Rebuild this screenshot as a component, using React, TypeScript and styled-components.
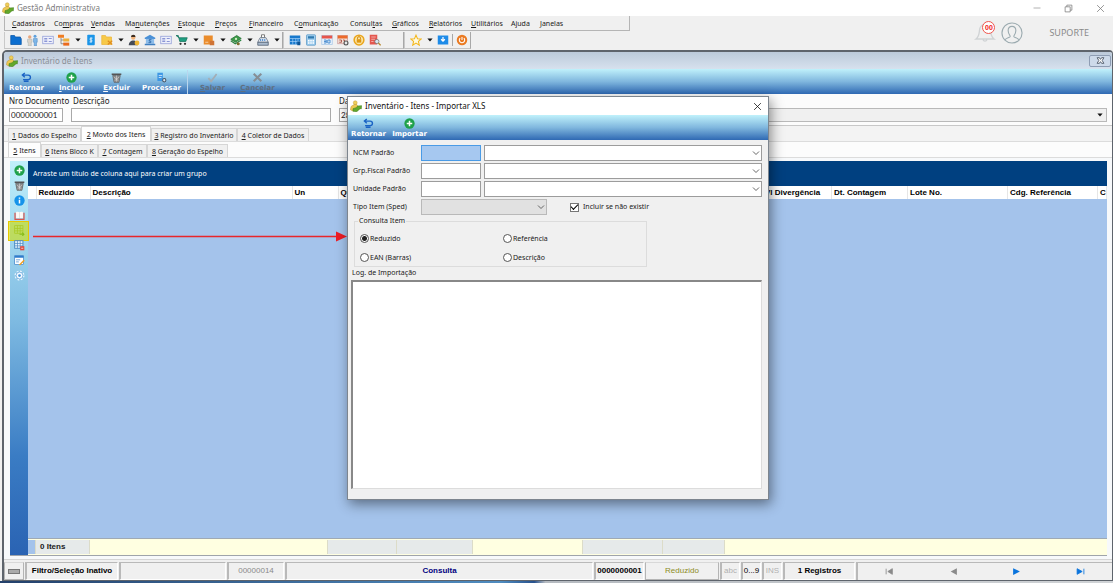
import React from 'react';
import styled, { createGlobalStyle, css } from 'styled-components';

const GlobalStyle = createGlobalStyle`
  * { box-sizing: border-box; }
  body { margin: 0; background: #f0f0f0; font-family: 'Noto Sans', sans-serif; font-size: 8px; line-height: 12px; color: #1a1a1a; }
  button, input, select, textarea { font: inherit; color: inherit; margin: 0; }
  #root { display: flex; min-height: 100vh; }
`;

const barGradient = 'linear-gradient(#c0f1fb, #80b7de 50%, #2f69b3)';
const uiSmall = css`font-family: 'Noto Sans', sans-serif; font-size: 7px; line-height: 12px;`;
const sans = css`font-family: 'Liberation Sans', sans-serif; font-size: 8px; line-height: 12px;`;
const narrow = css`font-family: Lato, sans-serif; font-size: 8px; line-height: 12px;`;

/* ---------- icons ---------- */

const drawings: Record<string, React.ReactNode> = {
  app: (
    <>
      <circle cx="7" cy="3.600" r="2.600" fill="#efcf5a" stroke="#c39a35" strokeWidth=".6" />
      <path d="M5.500 6h3.500l2 2.500-1 4.500-6.500 1.500L.500 13l1-4.500z" fill="#edc952" stroke="#b68a2a" strokeWidth=".6" />
      <path d="M4 11.500l5-1.500 1-2 5.500-.5-.5 4.500-1.500-.5L9 15.500l-5-.5z" fill="#63a82c" stroke="#3f7d1c" strokeWidth=".7" />
    </>
  ),
  folder: <path d="M1 2h5l1 2h7v2h1v8H1z" fill="#0d6fd0" stroke="#0a57a8" />,
  people: (
    <>
      <circle cx="5" cy="4" r="2.300" fill="#e9a77c" /><circle cx="12" cy="3" r="2" fill="#5da0dd" />
      <path d="M2 7h6v4H7v5H3v-5H2z" fill="#dcd3c9" stroke="#9aa" strokeWidth=".6" />
      <path d="M10 6h5v5h-1v5h-3v-5h-1z" fill="#7db6e8" stroke="#3f7fc0" strokeWidth=".6" />
    </>
  ),
  card: (
    <>
      <rect x="1" y="3" width="14" height="10" fill="#eef0fb" stroke="#8f9bd6" />
      <path d="M3 6h4M3 8h4M3 10h4M9 6h4M9 10h4" stroke="#7f8bd0" strokeWidth="1.200" />
    </>
  ),
  tree: (
    <>
      <path d="M4 5v8h5M4 8h5" stroke="#777" fill="none" />
      <rect x="0" y="1" width="8" height="4" fill="#ef7d22" /><rect x="7" y="6" width="8" height="4" fill="#efb03c" /><rect x="7" y="11.500" width="8" height="4" fill="#eb6a1c" />
    </>
  ),
  money: (
    <>
      <rect x="3" y="1" width="10" height="14" rx="1" fill="#1b95e8" />
      <path d="M10 5.500H7.500a1.300 1.300 0 0 0 0 2.500h1a1.300 1.300 0 0 1 0 2.500H6M8 4.500v7" stroke="#fff" fill="none" />
    </>
  ),
  folderGear: (
    <>
      <path d="M1 2h5l1 2h7v10H1z" fill="#f7c948" stroke="#ecb63c" /><path d="M9 9l6 5M15 9l-6 5" stroke="#df8b1e" strokeWidth="1.500" />
    </>
  ),
  person: (
    <>
      <circle cx="7" cy="4.500" r="3" fill="#f0b27a" /><path d="M4 4a3 3 0 0 1 6 0z" fill="#3a2c22" />
      <path d="M1 15c0-4 3-6.500 6-6.500s6 2.500 6 6.500z" fill="#454b57" /><circle cx="12" cy="12" r="3.200" fill="#f2b632" />
    </>
  ),
  bank: (
    <>
      <path d="M1 5l7-4 7 4v1.500H1z" fill="#4a90d6" /><path d="M2.500 6.500h11V13h-11z" fill="#8dbdea" /><path d="M1 13h14v2H1z" fill="#3f7fc0" />
      <path d="M10 7.500H7v2h2v2H6" stroke="#225e9f" fill="none" />
    </>
  ),
  cart: (
    <>
      <path d="M0 2h3l2 8h8l2-5H4z" fill="#1f9e80" stroke="#14715b" /><circle cx="6" cy="13" r="1.500" fill="#333" /><circle cx="12" cy="13" r="1.500" fill="#333" />
    </>
  ),
  box: (
    <>
      <rect x="1" y="2" width="12" height="12" fill="#ea8c2c" /><rect x="9" y="9" width="6" height="6" fill="#cf7436" /><path d="M3 11h4" stroke="#fbe3c5" />
    </>
  ),
  cash: (
    <>
      <path d="M1 7l8-5 6 4-8 5z" fill="#3d9a4a" stroke="#1f6c2e" /><path d="M1 9l6 4 8-5" fill="none" stroke="#2c8340" strokeWidth="1.500" /><circle cx="8" cy="6.500" r="1.500" fill="#d6efc8" /><circle cx="11" cy="13" r="2" fill="#7f6c2f" />
    </>
  ),
  register: (
    <>
      <path d="M6 1h4v4H6z" fill="#fff" stroke="#555" /><path d="M4 5h8l3 6H1z" fill="#eef2f7" stroke="#5c6a7c" /><path d="M1 11h14v4H1z" fill="#a9bacd" stroke="#4c5a6c" /><path d="M4 8h8" stroke="#2f78c8" strokeWidth="2" strokeDasharray="1.500 1" />
    </>
  ),
  sheet: (
    <>
      <rect x="1" y="2" width="14" height="12" fill="#1778cc" /><path d="M1 6h14M1 10h14M5 6v8M9 6v8M12 6v8" stroke="#b6dcff" strokeWidth=".8" /><path d="M11 10h4v5h-4z" fill="#0c5394" />
    </>
  ),
  calc: (
    <>
      <rect x="2" y="1" width="12" height="14" rx="1" fill="#9fcdee" stroke="#5c9ac6" /><rect x="4" y="3" width="8" height="3" fill="#2e79ae" /><path d="M4 9h8M4 12h8" stroke="#fff" strokeWidth="2" strokeDasharray="2 1" />
    </>
  ),
  calBlue: (
    <>
      <rect x="1" y="2" width="14" height="12" fill="#e6f0fb" stroke="#a9c8e8" /><path d="M1 2h14v4H1z" fill="#e7554b" /><path d="M4 8h3v4H4M4 10h3M9 8h3v4H9z" stroke="#2676c6" fill="none" />
    </>
  ),
  calGear: (
    <>
      <rect x="1" y="2" width="13" height="11" fill="#f3dfd5" stroke="#c99" /><path d="M1 2h13v4H1z" fill="#ec6a2a" /><path d="M3 8h3v3H3M8 8h2v3" stroke="#9c3a30" fill="none" /><circle cx="12" cy="12" r="2.600" fill="#e9e9e9" stroke="#555" strokeWidth="1.500" />
    </>
  ),
  lock: (
    <>
      <circle cx="8" cy="8" r="6.500" fill="#fbe3a1" stroke="#eaa51c" strokeWidth="2" /><path d="M6 7V5.500a2 2 0 0 1 4 0V7" fill="none" stroke="#d08a10" strokeWidth="1.300" /><rect x="5" y="7" width="6" height="4.500" fill="#dd9713" />
    </>
  ),
  report: (
    <>
      <path d="M1 1h10v13H1z" fill="#e4574f" /><path d="M3 4h6M3 7h5M3 10h3" stroke="#f9c9c4" /><circle cx="10.500" cy="10" r="2.800" fill="#d7e8f2" stroke="#777" /><path d="M12.500 12l3 3" stroke="#b8862c" strokeWidth="1.600" />
    </>
  ),
  star: <path d="M8 1.500l2 4.700 5 .4-3.800 3.300 1.200 5L8 12.200l-4.400 2.700 1.200-5L1 6.600l5-.4z" fill="#fffbe0" stroke="#f3b61c" strokeWidth="1.400" />,
  download: (
    <>
      <rect x="1" y="2" width="14" height="12" fill="#1e8be8" /><path d="M8 4v5M5.500 7L8 9.500 10.500 7" stroke="#fff" strokeWidth="1.600" fill="none" />
    </>
  ),
  power: (
    <>
      <circle cx="8" cy="8" r="7" fill="#ea7a22" /><path d="M5.500 5.500a3.600 3.600 0 1 0 5 0M8 4v4" stroke="#fff" strokeWidth="1.400" fill="none" />
    </>
  ),
  back: <path d="M2 4.500h8.500a3.200 3.200 0 0 1 0 6.500H3M5.500 1.500L2 4.500 5.500 7.500M4 13.500h7" stroke="#1a63c4" strokeWidth="2" fill="none" />,
  add: (
    <>
      <circle cx="8" cy="8" r="7.500" fill="#1fa14a" /><path d="M8 4v8M4 8h8" stroke="#fff" strokeWidth="2.200" />
    </>
  ),
  trash: (
    <>
      <path d="M1 2h14v2.500H1z" fill="#555" /><path d="M2.500 5h11l-2 10h-7z" fill="#8b8b8b" stroke="#5a5a5a" /><path d="M4 7l7 6M12 7l-7 6M8 5v9" stroke="#e4e4e4" strokeWidth=".8" />
    </>
  ),
  process: (
    <>
      <path d="M2 1h8v12H2z" fill="#3e97e4" /><path d="M4 5h5M4 8h4" stroke="#fff" /><circle cx="12" cy="12" r="2.400" fill="#d8e6f2" stroke="#456" strokeWidth="1.500" />
    </>
  ),
  check: <path d="M2 9l4 4.500L14 3" stroke="#a3adb4" strokeWidth="2.500" fill="none" />,
  cross: <path d="M2.500 2.500l11 11M13.500 2.500l-11 11" stroke="#868e95" strokeWidth="3" fill="none" />,
  info: (
    <>
      <circle cx="8" cy="8" r="7.500" fill="#1593ea" /><path d="M8 7v5.500M8 3.500v2" stroke="#fff" strokeWidth="2.200" />
    </>
  ),
  book: (
    <>
      <path d="M1.500 4v9.500h13V4" fill="none" stroke="#d8554e" strokeWidth="1.800" />
      <path d="M3 3c2-.6 4-.4 5 .8 1-1.200 3-1.400 5-.8v8.500H3z" fill="#fdf8f5" />
      <path d="M8 4v7.500" stroke="#d9c9c4" strokeWidth=".8" />
    </>
  ),
  gridExport: (
    <>
      <rect x="1" y="1" width="12" height="11" fill="none" stroke="#6fa84a" /><path d="M1 5h12M1 8.500h12M5 1v11M9 1v11" stroke="#6fa84a" /><path d="M8 13.500h6M12 11l2.500 2.500L12 16" stroke="#1b8a3e" strokeWidth="1.500" fill="none" />
    </>
  ),
  gridRemove: (
    <>
      <rect x="1" y="1" width="12" height="11" fill="#eaf4fc" stroke="#4383bf" strokeWidth="1.300" /><path d="M1 5h12M1 8.500h12M5 1v11M9 1v11" stroke="#4383bf" /><rect x="9" y="9" width="6" height="6" fill="#e2483d" /><path d="M10.500 12h3" stroke="#fff" />
    </>
  ),
  note: (
    <>
      <rect x="1" y="1" width="13" height="13" fill="#fff" stroke="#3880c8" /><path d="M1 2.500h13" stroke="#2f7ccc" strokeWidth="3" /><path d="M3 7h6M3 10h4" stroke="#3880c8" /><path d="M7 14l7-7 1.500 1.500L9 15z" fill="#f0a020" />
    </>
  ),
  gear: (
    <>
      <circle cx="8" cy="8" r="5.500" fill="none" stroke="#e9f5ff" strokeWidth="3.500" strokeDasharray="2.400 1.900" /><circle cx="8" cy="8" r="5" fill="#f4faff" stroke="#5b9ed6" /><circle cx="8" cy="8" r="2" fill="#4d97d8" />
    </>
  ),
  first: <path d="M2 3v10M13 3L5 8l8 5z" stroke="#8a8a8a" fill="#8a8a8a" strokeWidth="1.500" />,
  prev: <path d="M14 2L3 8l11 6z" fill="#8a8a8a" />,
  next: <path d="M2 2l12 6-12 6z" fill="#0a74dd" />,
  last: <path d="M2 3l9 5-9 5zM14 3v10" stroke="#0a74dd" fill="#0a74dd" strokeWidth="1.500" />,
  caret: <path d="M1 4h14L8 12z" fill="#111" />,
  chevron: <path d="M2 5l6 6 6-6" fill="none" stroke="#555" strokeWidth="1.800" />,
  minimize: <path d="M1 8h14" stroke="#888" strokeWidth="1.300" />,
  restore: <path d="M2 5h9v9H2zM5 5V2h9v9h-3" fill="none" stroke="#777" strokeWidth="1.300" />,
  close: <path d="M2 2l12 12M14 2L2 14" stroke="currentColor" strokeWidth="1.400" />,
  mdiClose: <path d="M2 3h4l2 3 2-3h4l-3 5 3 5h-4l-2-3-2 3H2l3-5z" fill="#fff" stroke="#4b5766" strokeWidth="1.600" />,
  bell: (
    <path d="M2 12c2-1.500 2-3 2.300-5.500C4.500 4 5.500 2.500 8 2.300c2.500.2 3.500 1.700 3.700 4.200C12 9 12 10.500 14 12zM6.700 12.500a1.400 1.400 0 0 0 2.600 0M8 2.300V1.200" fill="none" stroke="#d0d3d5" strokeWidth=".9" />
  ),
  user: (
    <>
      <circle cx="8" cy="8" r="7.300" fill="none" stroke="#9cabb0" strokeWidth=".8" />
      <path d="M3 13c.5-1.500 3.500-1.500 3.700-2.500.1-.8-1.500-1.800-1.500-4.300 0-1.900 1-3 2.800-3s2.800 1.100 2.800 3c0 2.500-1.600 3.500-1.500 4.300.2 1 3.200 1 3.700 2.500" fill="none" stroke="#9cabb0" strokeWidth=".8" />
    </>
  ),
};

const Svg = styled.svg<{ $size: number }>`
  display: block;
  flex: none;
  width: ${(p) => p.$size}px;
  height: ${(p) => p.$size}px;
`;

const Icon = ({ name, size = 12 }: { name: string; size?: number }) => (
  <Svg $size={size} viewBox="0 0 16 16" aria-hidden="true">{drawings[name]}</Svg>
);

/* "&" marks the letter that is the access key */
const KeyText = ({ text }: { text: string }) => {
  const i = text.indexOf('&');
  if (i < 0) return <>{text}</>;
  return <span>{text.slice(0, i)}<u>{text[i + 1]}</u>{text.slice(i + 2)}</span>;
};

/* ---------- application frame ---------- */

const Frame = styled.div`
  position: relative;
  flex: 1;
  min-width: 0;
  display: flex;
  flex-direction: column;
  overflow: hidden;
`;

const PlainButton = styled.button`
  border: 0;
  padding: 0;
  background: none;
  display: flex;
  align-items: center;
  justify-content: center;
`;

const TitleBar = styled.header`
  display: flex;
  align-items: center;
  gap: 3px;
  height: 16px;
  padding: 0 8px 0 2px;
  background: #fff;
  color: #7c7c7c;
`;

const WindowControls = styled.div`
  display: flex;
  gap: 23px;
  margin-left: auto;
`;

const CommandArea = styled.div`
  display: flex;
  height: 34px;
  background: #f0f0f0;
`;

const CommandBars = styled.div`
  display: flex;
  flex-direction: column;
  gap: 1px;
  width: 630px;
`;

const MenuBar = styled.nav`
  ${uiSmall}
  display: flex;
  align-items: center;
  height: 15px;
  margin-left: 4px;
  padding: 1px 0 0 7px;
  border-left: 1px solid #b5b5b5;
  border-right: 1px solid #b5b5b5;
  border-bottom: 1px solid #b5b5b5;
`;

const MenuItem = styled(PlainButton)<{ $width: number }>`
  justify-content: flex-start;
  width: ${(p) => p.$width}px;
  white-space: nowrap;
`;

const ToolBands = styled.div`
  display: flex;
  height: 17px;
  margin-left: 4px;
`;

const Band = styled.div<{ $width?: number }>`
  display: flex;
  align-items: center;
  width: ${(p) => (p.$width ? `${p.$width}px` : 'auto')};
  padding-left: 3px;
  border-left: 1px solid #c9c9c9;
  border-right: 1px solid #a8a8a8;
  border-bottom: 1px solid #c4c4c4;
`;

const ToolButton = styled(PlainButton)<{ $caret?: boolean }>`
  width: ${(p) => (p.$caret ? 11 : 16)}px;
  height: 16px;
`;

const BandDivider = styled.span`
  width: 1px;
  height: 12px;
  margin: 0 1px 0 1px;
  background: #a8a8a8;
`;

const Account = styled.div`
  display: flex;
  align-items: center;
  gap: 4px;
  margin-left: auto;
  padding-right: 24px;
  font-size: 9px;
  color: #8a8a8a;
`;

const Bell = styled.div`
  position: relative;
`;

const Badge = styled.span`
  position: absolute;
  top: 0;
  right: 2px;
  width: 13px;
  height: 13px;
  border: 1px solid #f0544c;
  border-radius: 50%;
  background: #fff;
  color: #f01818;
  font: bold 7px/11px 'Liberation Sans', sans-serif;
  text-align: center;
`;

const SupportLabel = styled.span`
  margin-left: 22px;
`;

/* ---------- inventory window ---------- */

const MdiWindow = styled.main`
  flex: 1;
  display: flex;
  flex-direction: column;
  margin-left: 2px;
  border: solid #5e646c;
  border-width: 2px 1px 1px 2px;
  border-radius: 5px 4px 0 0;
  background: #f7f9fb;
  overflow: hidden;
`;

const MdiTitle = styled.div`
  display: flex;
  align-items: center;
  gap: 3px;
  height: 17px;
  padding-left: 2px;
  background: linear-gradient(#bccada, #d6e1ee);
  color: #8a8f96;
`;

const MdiCloseButton = styled(PlainButton)`
  width: 22px;
  height: 12px;
  margin: 0 1px 0 auto;
  border: 1px solid #8e9db4;
  border-radius: 2px;
  background: #cddaea;
`;

const ActionBar = styled.div`
  display: flex;
  height: 25px;
  background: ${barGradient};
`;

const ActionButton = styled.button<{ $width: number }>`
  display: flex;
  flex-direction: column;
  align-items: center;
  justify-content: flex-end;
  width: ${(p) => p.$width}px;
  border: 0;
  padding: 0 0 1px;
  background: none;
  color: #fff;
  font: bold 7px/10px 'DejaVu Sans', sans-serif;
  &:disabled { color: #5f6f80; }
`;

const ActionDivider = styled.span`
  width: 1px;
  margin: 1px 2px 0 3px;
  background: #b9d6ee;
`;

const RecordForm = styled.form`
  display: grid;
  grid-template-columns: 54px 260px 1fr;
  column-gap: 8px;
  padding: 1px 5px 2px 5px;
  height: 32px;
  border-bottom: 1px solid #c8c8c8;
  background: #fcfcfc;
`;

const FormField = styled.div`
  display: flex;
  flex-direction: column;
  gap: 1px;
  min-width: 0;
  white-space: nowrap;
`;

const TextBox = styled.input`
  ${narrow}
  width: 100%;
  min-width: 0;
  height: 14px;
  padding: 0 1px;
  border: 1px solid #a9a9a9;
  background: #fff;
`;

const FieldRow = styled.div`
  display: grid;
  grid-template-columns: 60px 1fr;
  gap: 4px;
`;

const SelectWrap = styled.span<{ $pad?: number }>`
  display: grid;
  align-items: center;
  & > * { grid-area: 1 / 1; }
  & > svg { justify-self: end; margin-right: ${(p) => p.$pad ?? 2}px; pointer-events: none; }
`;

const Select = styled.select<{ $tone?: string; $height?: number }>`
  appearance: none;
  width: 100%;
  height: ${(p) => p.$height ?? 16}px;
  border: 1px solid ${(p) => (p.$tone ? '#b9b9b9' : '#9c9c9c')};
  border-radius: 0;
  padding: 0 2px;
  background: ${(p) => p.$tone ?? '#fff'};
  opacity: 1;
`;

const Tabs = styled.div<{ $inner?: boolean }>`
  ${uiSmall}
  display: flex;
  align-items: flex-end;
  height: 16px;
  padding-left: 4px;
  background: ${(p) => (p.$inner ? '#fcfcfc' : '#f3f3f3')};
  border-bottom: 1px solid #dcdcdc;
`;

const Tab = styled.button<{ $active?: boolean; $width: number }>`
  width: ${(p) => p.$width}px;
  height: ${(p) => (p.$active ? 15 : 13)}px;
  padding: 0;
  border: 1px solid #d6d6d6;
  border-bottom: 0;
  background: ${(p) => (p.$active ? '#fdfdfd' : '#f0f0f0')};
  line-height: 11px;
  white-space: nowrap;
`;

const GridPanel = styled.section`
  flex: 1;
  display: flex;
  margin: 3px 5px 3px 6px;
  border-bottom: 1px solid #9fa4aa;
`;

const SideBar = styled.div`
  display: flex;
  flex-direction: column;
  width: 18px;
  padding-top: 2px;
  background: linear-gradient(#c0f0fb, #7fbbe2 40%, #3a7cc4 75%, #2a63b3);
`;

const SideButton = styled(PlainButton)<{ $marked?: boolean }>`
  position: relative;
  width: 18px;
  height: 15px;
  ${(p) => p.$marked && css`
    &::after {
      content: '';
      position: absolute;
      inset: -2px -1px -3px -2px;
      border: 1px solid #e6c800;
      background: rgba(206, 222, 0, 0.6);
    }
  `}
`;

const GridArea = styled.div`
  flex: 1;
  min-width: 0;
  display: flex;
  flex-direction: column;
  background: #a4c3eb;
`;

const GroupBand = styled.div`
  ${uiSmall}
  display: flex;
  align-items: center;
  height: 25px;
  padding-left: 5px;
  background: #004080;
  color: #fff;
`;

const DataTable = styled.table`
  ${sans}
  width: 100%;
  table-layout: fixed;
  border-collapse: collapse;
`;

const Th = styled.th`
  height: 13px;
  padding: 0 0 0 2px;
  border-right: 1px solid #e6e6e6;
  background: #fff;
  color: #000;
  text-align: left;
  white-space: nowrap;
  overflow: hidden;
`;

const Totals = styled.div`
  ${sans}
  display: flex;
  height: 17px;
  margin-top: auto;
  padding: 1px 0;
  border-top: 1px solid #9fa9b4;
  background: #ffffe1;
  font-weight: bold;
`;

const TotalCell = styled.div<{ $width: number; $tone?: 'grey' | 'blue' }>`
  display: flex;
  align-items: center;
  width: ${(p) => p.$width}px;
  padding-left: 4px;
  border-right: 1px solid #dcdcc8;
  background: ${(p) => (p.$tone === 'grey' ? '#e6eaea' : p.$tone === 'blue' ? '#a4c3eb' : 'none')};
`;

const StatusBar = styled.footer`
  ${sans}
  display: flex;
  gap: 1px;
  height: 21px;
  padding-top: 2px;
  border-top: 1px solid #d5d5d5;
  background: #f0f0f0;
`;

const StatusCell = styled.div<{ $width?: number; $color?: string; $bold?: boolean }>`
  flex: ${(p) => (p.$width ? `none` : '1')};
  width: ${(p) => (p.$width ? `${p.$width}px` : 'auto')};
  display: flex;
  align-items: center;
  justify-content: center;
  border: solid;
  border-width: 1px 1px 1px 2px;
  border-color: #b9b9b9 #fff #fff #b9b9b9;
  color: ${(p) => p.$color ?? '#000'};
  font-weight: ${(p) => (p.$bold ? 'bold' : 'normal')};
  white-space: nowrap;
  overflow: hidden;
`;

const StatusButton = styled.button<{ $width: number }>`
  display: flex;
  align-items: center;
  justify-content: center;
  width: ${(p) => p.$width}px;
  padding: 0;
  border: 1px solid #b4b4b4;
  border-top-color: #d8d8d8;
  background: #f0f0f0;
  color: #8c8c1e;
`;

const Indicator = styled.span`
  width: 12px;
  height: 5px;
  border: 1px solid #777;
  background: #aaa;
`;

const RecordNav = styled.nav`
  display: grid;
  grid-template-columns: repeat(4, 1fr);
  width: 256px;
  border-left: 2px solid #b9b9b9;
  border-top: 1px solid #b9b9b9;
`;

const DesktopEdge = styled.div`
  height: 2px;
  background: linear-gradient(90deg, #23406b, #4f8cc0 45%, #27518d 48%, #b5bac0 49%, #d0d3d6);
`;

/* ---------- import dialog ---------- */

const Dialog = styled.section`
  position: absolute;
  left: 347px;
  top: 96px;
  width: 422px;
  height: 404px;
  display: flex;
  flex-direction: column;
  border: 1px solid #7d858e;
  background: #f0f0f0;
  box-shadow: 2px 4px 12px rgba(0, 0, 0, 0.45);
`;

const DialogTitle = styled.div`
  display: flex;
  align-items: center;
  gap: 3px;
  height: 18px;
  padding: 0 6px 0 2px;
  background: #fff;
  color: #111;
`;

const DialogClose = styled(PlainButton)`
  margin-left: auto;
`;

const DialogForm = styled.form`
  ${uiSmall}
  flex: 1;
  display: flex;
  flex-direction: column;
  padding: 5px 6px 10px 3px;
`;

const DialogRows = styled.div`
  display: flex;
  flex-direction: column;
  gap: 2px;
  padding-left: 2px;
`;

const DialogRow = styled.div<{ $type?: boolean }>`
  display: grid;
  grid-template-columns: ${(p) => (p.$type ? '65px 126px 1fr' : '65px 60px 1fr')};
  column-gap: 3px;
  align-items: center;
`;

const LabelCell = styled.label`
  white-space: nowrap;
`;

const CodeBox = styled.input<{ $focused?: boolean }>`
  width: 100%;
  height: 16px;
  padding: 0 2px;
  border: 1px solid ${(p) => (p.$focused ? '#4a9be6' : '#9c9c9c')};
  background: ${(p) => (p.$focused ? '#a6c8f0' : '#fff')};
`;

const CheckLabel = styled.label`
  display: flex;
  align-items: center;
  gap: 4px;
  margin-left: 20px;
`;

const CheckBox = styled.input`
  appearance: none;
  display: grid;
  place-items: center;
  width: 9px;
  height: 9px;
  border: 1px solid #777;
  background: #fff;
  &:checked::after {
    content: '';
    width: 6px;
    height: 3px;
    margin-bottom: 2px;
    border: solid #000;
    border-width: 0 0 1px 1px;
    transform: rotate(-45deg);
  }
`;

const QueryGroup = styled.fieldset`
  display: grid;
  grid-template-columns: 143px 1fr;
  width: 293px;
  height: 52px;
  margin: 0 0 0 3px;
  padding: 2px 4px 0 5px;
  border: 1px solid #dcdcdc;
`;

const QueryLegend = styled.legend`
  padding: 0 1px;
  margin-left: -2px;
`;

const RadioLabel = styled.label`
  display: flex;
  align-items: center;
  gap: 1px;
  height: 19px;
`;

const Radio = styled.input`
  appearance: none;
  width: 9px;
  height: 9px;
  border: 1px solid #555;
  border-radius: 50%;
  background: #fff;
  &:checked { background: radial-gradient(circle, #222 0 2px, #fff 3px); }
`;

const LogLabel = styled.label`
  margin-left: 1px;
`;

const LogBox = styled.textarea`
  flex: 1;
  width: 100%;
  margin-top: 1px;
  border: 1px solid #dcdcdc;
  border-top: 2px solid #888;
  border-left: 2px solid #888;
  background: #fff;
  resize: none;
`;

const Pointer = styled.svg`
  position: absolute;
  left: 33px;
  top: 230px;
  width: 314px;
  height: 13px;
  pointer-events: none;
`;

/* ---------- content ---------- */

const menus: [string, number][] = [
  ['&Cadastros', 42], ['Co&mpras', 37], ['&Vendas', 34], ['Ma&nutenções', 53], ['&Estoque', 37],
  ['&Preços', 34], ['&Financeiro', 45], ['C&omunicação', 56], ['Consul&tas', 42], ['&Gráficos', 37],
  ['&Relatórios', 42], ['&Utilitários', 40], ['A&juda', 29], ['&Janelas', 37],
];
const mainTools = ['folder', 'people', 'card', 'tree', 'caret', 'money', 'folderGear', 'caret', 'person', 'bank', 'card', 'cart', 'caret', 'box', 'caret', 'cash', 'caret', 'register', 'caret'];
const officeTools = ['sheet', 'calc', 'calBlue', 'calGear', 'lock', 'report'];
const sideTools = ['add', 'trash', 'info', 'book', 'gridExport', 'gridRemove', 'note', 'gear'];

const columns: { title: string; width?: number }[] = [
  { title: '', width: 8 },
  { title: 'Reduzido', width: 54 },
  { title: 'Descrição', width: 202 },
  { title: 'Un', width: 46 },
  { title: 'Qtd' },
  { title: 'Vl Divergência', width: 69 },
  { title: 'Dt. Contagem', width: 76 },
  { title: 'Lote No.', width: 100 },
  { title: 'Cdg. Referência', width: 90 },
  { title: 'C', width: 9 },
];

const Tools = ({ names }: { names: string[] }) => (
  <>
    {names.map((n, i) => (
      <ToolButton key={i} $caret={n === 'caret'} aria-label={n}>
        <Icon name={n} size={n === 'caret' ? 6 : 12} />
      </ToolButton>
    ))}
  </>
);

const Action = ({ icon, text, width = 45, disabled }: { icon: string; text: string; width?: number; disabled?: boolean }) => (
  <ActionButton type="button" $width={width} disabled={disabled}>
    <Icon name={icon} size={11} />
    <KeyText text={text} />
  </ActionButton>
);

const CodeLookup = ({ id, label, focused }: { id: string; label: string; focused?: boolean }) => (
  <DialogRow>
    <LabelCell htmlFor={id}>{label}</LabelCell>
    <CodeBox id={id} $focused={focused} />
    <SelectWrap>
      <Select aria-label={label} />
      <Icon name="chevron" size={8} />
    </SelectWrap>
  </DialogRow>
);

const Query = ({ text, checked }: { text: string; checked?: boolean }) => (
  <RadioLabel><Radio type="radio" name="consulta" defaultChecked={checked} />{text}</RadioLabel>
);

export default function App() {
  return (
    <>
      <GlobalStyle />
      <Frame>
        <TitleBar>
          <Icon name="app" />
          <span>Gestão Administrativa</span>
          <WindowControls>
            <PlainButton aria-label="Minimizar"><Icon name="minimize" size={8} /></PlainButton>
            <PlainButton aria-label="Restaurar"><Icon name="restore" size={9} /></PlainButton>
            <PlainButton aria-label="Fechar"><Icon name="close" size={9} /></PlainButton>
          </WindowControls>
        </TitleBar>

        <CommandArea>
          <CommandBars>
            <MenuBar>
              {menus.map(([text, width]) => <MenuItem key={text} $width={width}><KeyText text={text} /></MenuItem>)}
            </MenuBar>
            <ToolBands>
              <Band $width={279}><Tools names={mainTools} /></Band>
              <Band $width={121}><Tools names={officeTools} /></Band>
              <Band>
                <Tools names={['star', 'caret', 'download']} />
                <BandDivider />
                <Tools names={['power']} />
              </Band>
            </ToolBands>
          </CommandBars>
          <Account>
            <Bell><Icon name="bell" size={24} /><Badge>00</Badge></Bell>
            <Icon name="user" size={22} />
            <SupportLabel>SUPORTE</SupportLabel>
          </Account>
        </CommandArea>

        <MdiWindow>
          <MdiTitle>
            <Icon name="app" />
            <span>Inventário de Itens</span>
            <MdiCloseButton aria-label="Fechar inventário"><Icon name="mdiClose" size={9} /></MdiCloseButton>
          </MdiTitle>
          <ActionBar>
            <Action icon="back" text="Retornar" />
            <Action icon="add" text="&Incluir" />
            <Action icon="trash" text="&Excluir" />
            <Action icon="process" text="Processar" />
            <ActionDivider />
            <Action icon="check" text="&Salvar" disabled />
            <Action icon="cross" text="&Cancelar" disabled />
          </ActionBar>
          <RecordForm>
            <FormField>
              <label htmlFor="doc">Nro Documento</label>
              <TextBox id="doc" defaultValue="0000000001" />
            </FormField>
            <FormField>
              <label htmlFor="desc">&nbsp;Descrição</label>
              <TextBox id="desc" />
            </FormField>
            <FormField>
              <label htmlFor="date">Data</label>
              <FieldRow>
                <TextBox id="date" defaultValue="28" />
                <SelectWrap $pad={4}>
                  <Select $tone="#f0f0f0" $height={14} aria-label="Estabelecimento" />
                  <Icon name="caret" size={6} />
                </SelectWrap>
              </FieldRow>
            </FormField>
          </RecordForm>
          <Tabs>
            <Tab $width={73}><KeyText text="&1 Dados do Espelho" /></Tab>
            <Tab $width={70} $active><KeyText text="&2 Movto dos Itens" /></Tab>
            <Tab $width={86}><KeyText text="&3 Registro do Inventário" /></Tab>
            <Tab $width={72}><KeyText text="&4 Coletor de Dados" /></Tab>
          </Tabs>
          <Tabs $inner>
            <Tab $width={33} $active><KeyText text="&5 Itens" /></Tab>
            <Tab $width={57}><KeyText text="&6 Itens Bloco K" /></Tab>
            <Tab $width={49}><KeyText text="&7 Contagem" /></Tab>
            <Tab $width={81}><KeyText text="&8 Geração do Espelho" /></Tab>
          </Tabs>
          <GridPanel>
            <SideBar>
              {sideTools.map((n) => (
                <SideButton key={n} $marked={n === 'gridExport'} aria-label={n}><Icon name={n} size={11} /></SideButton>
              ))}
            </SideBar>
            <GridArea>
              <GroupBand>Arraste um título de coluna aqui para criar um grupo</GroupBand>
              <DataTable>
                <colgroup>
                  {columns.map((c, i) => <col key={i} width={c.width} />)}
                </colgroup>
                <thead>
                  <tr>{columns.map((c, i) => <Th key={i}>{c.title}</Th>)}</tr>
                </thead>
              </DataTable>
              <Totals>
                <TotalCell $width={8} $tone="blue" />
                <TotalCell $width={54} $tone="grey">0 Itens</TotalCell>
                <TotalCell $width={238} />
                <TotalCell $width={69} $tone="grey" />
                <TotalCell $width={76} $tone="grey" />
                <TotalCell $width={110} />
                <TotalCell $width={80} $tone="grey" />
                <TotalCell $width={62} $tone="grey" />
              </Totals>
            </GridArea>
          </GridPanel>
          <StatusBar>
            <StatusButton $width={20} aria-label="Indicador"><Indicator /></StatusButton>
            <StatusCell $width={93} $bold>Filtro/Seleção Inativo</StatusCell>
            <StatusCell $width={107} />
            <StatusCell $width={57} $color="#8a8a8a">00000014</StatusCell>
            <StatusCell $color="#000080" $bold>Consulta</StatusCell>
            <StatusCell $width={50} $bold>0000000001</StatusCell>
            <StatusButton $width={74}>Reduzido</StatusButton>
            <StatusCell $width={20} $color="#b0b0b0">abc</StatusCell>
            <StatusCell $width={20}>0...9</StatusCell>
            <StatusCell $width={20} $color="#b0b0b0">INS</StatusCell>
            <StatusCell $width={72} $bold>1 Registros</StatusCell>
            <RecordNav>
              {['first', 'prev', 'next', 'last'].map((n) => (
                <PlainButton key={n} aria-label={n}><Icon name={n} size={9} /></PlainButton>
              ))}
            </RecordNav>
          </StatusBar>
        </MdiWindow>
        <DesktopEdge />

        <Pointer viewBox="0 0 314 13" aria-hidden="true">
          <path d="M0 6.500h306" stroke="#e8262b" strokeWidth="1.300" />
          <path d="M303 1.500l11 5-11 5z" fill="#ee1c24" />
        </Pointer>

        <Dialog role="dialog" aria-labelledby="import-title">
          <DialogTitle>
            <Icon name="app" />
            <span id="import-title">Inventário - Itens - Importar XLS</span>
            <DialogClose aria-label="Fechar importação"><Icon name="close" size={9} /></DialogClose>
          </DialogTitle>
          <ActionBar>
            <Action icon="back" text="Retornar" width={41} />
            <Action icon="add" text="Importar" width={41} />
          </ActionBar>
          <DialogForm>
            <DialogRows>
              <CodeLookup id="ncm" label="NCM Padrão" focused />
              <CodeLookup id="grp" label="Grp.Fiscal Padrão" />
              <CodeLookup id="uni" label="Unidade Padrão" />
              <DialogRow $type>
                <LabelCell htmlFor="type">Tipo Item (Sped)</LabelCell>
                <SelectWrap>
                  <Select id="type" $tone="#e1e1e1" disabled />
                  <Icon name="chevron" size={8} />
                </SelectWrap>
                <CheckLabel><CheckBox type="checkbox" defaultChecked />Incluir se não existir</CheckLabel>
              </DialogRow>
            </DialogRows>
            <QueryGroup>
              <QueryLegend>Consulta Item</QueryLegend>
              <Query text="Reduzido" checked />
              <Query text="Referência" />
              <Query text="EAN (Barras)" />
              <Query text="Descrição" />
            </QueryGroup>
            <LogLabel htmlFor="log">Log. de Importação</LogLabel>
            <LogBox id="log" />
          </DialogForm>
        </Dialog>
      </Frame>
    </>
  );
}
